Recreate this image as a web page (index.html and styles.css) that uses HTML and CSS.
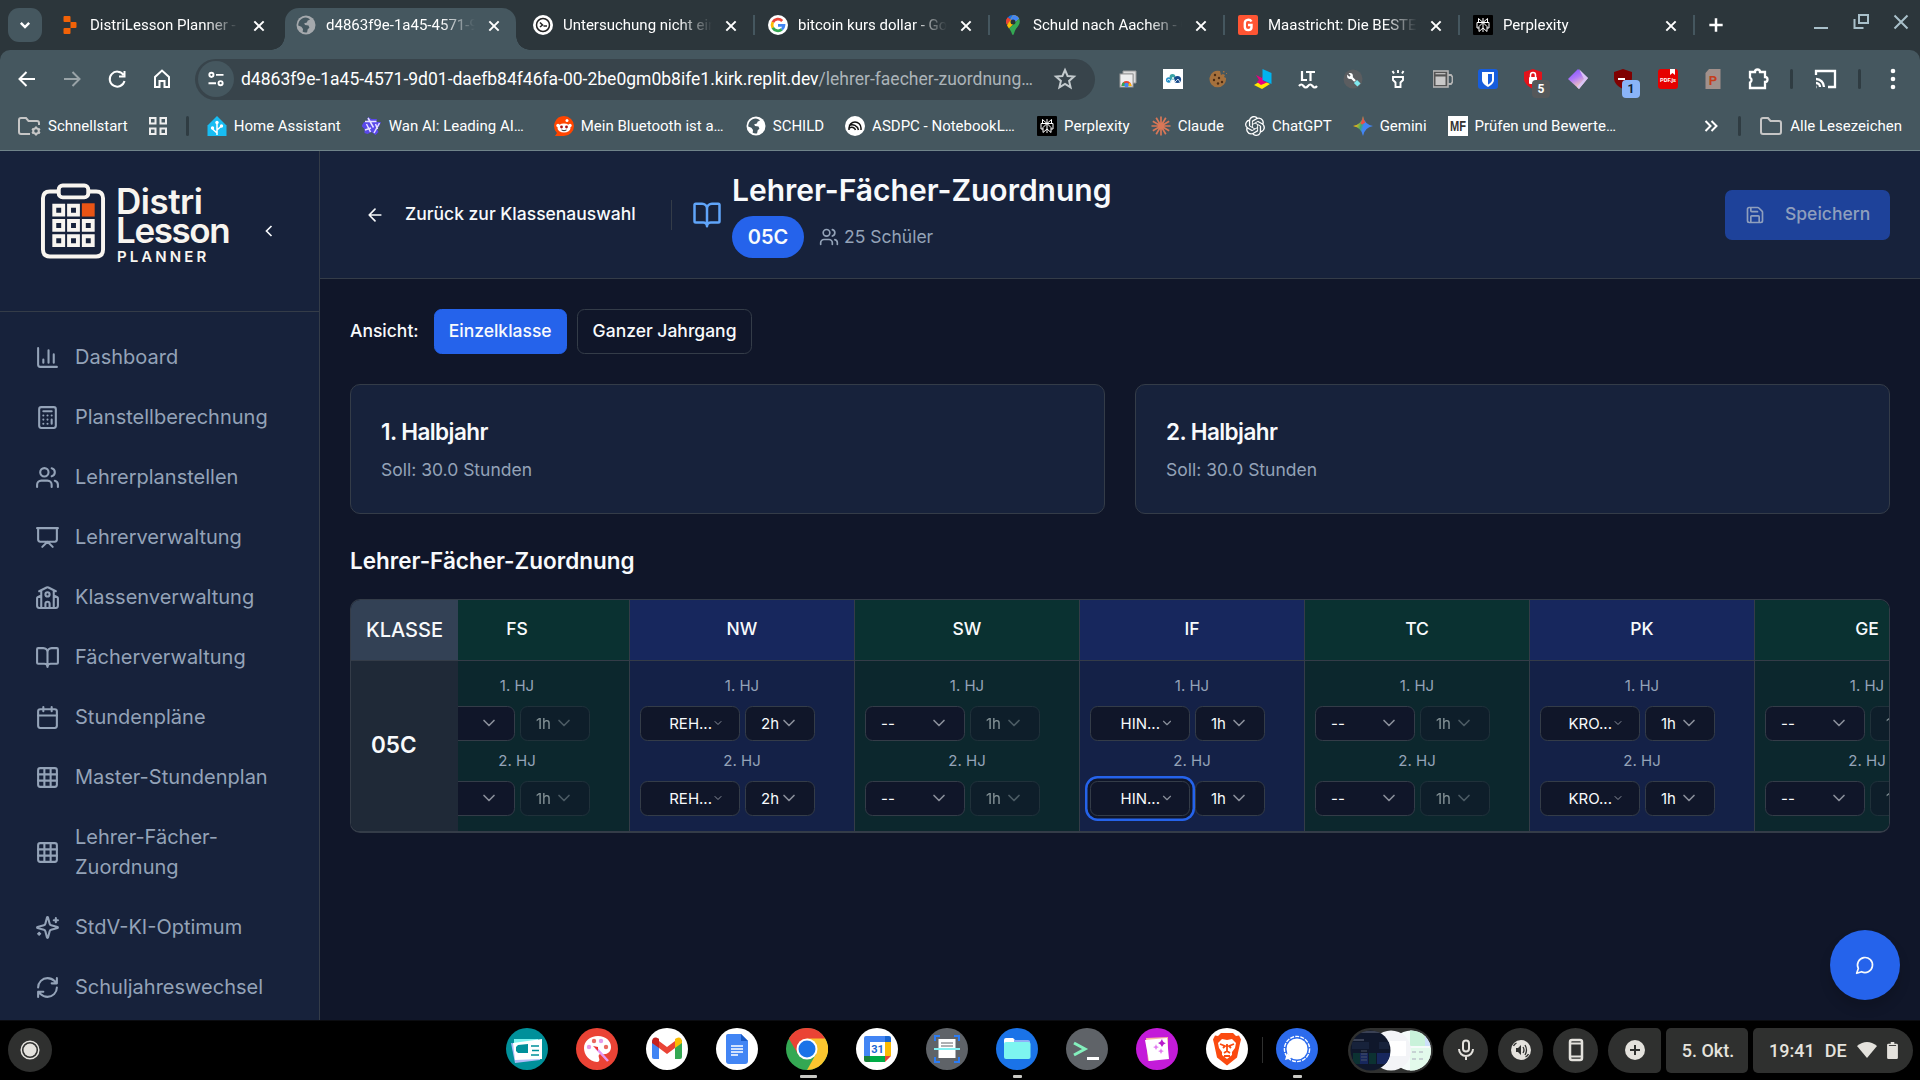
FILE: index.html
```html
<!DOCTYPE html>
<html lang="de">
<head>
<meta charset="utf-8">
<title>DistriLesson Planner</title>
<link rel="stylesheet" href="styles.css">
</head>
<body>
<svg class="sprite" aria-hidden="true">
  <symbol id="close" viewBox="0 0 24 24"><path d="M5 5l14 14M19 5L5 19"/></symbol>
  <symbol id="chart" viewBox="0 0 24 24"><path d="M3 3v16a2 2 0 0 0 2 2h16M18 17V9M13 17V5M8 17v-3"/></symbol>
  <symbol id="calc" viewBox="0 0 24 24"><rect x="4" y="2" width="16" height="20" rx="2"/><path d="M8 6h8M16 14v4M16 10h.01M12 10h.01M8 10h.01M12 14h.01M8 14h.01M12 18h.01M8 18h.01"/></symbol>
  <symbol id="users" viewBox="0 0 24 24"><path d="M16 21v-2a4 4 0 0 0-4-4H6a4 4 0 0 0-4 4v2M22 21v-2a4 4 0 0 0-3-3.87M16 3.13a4 4 0 0 1 0 7.75"/><circle cx="9" cy="7" r="4"/></symbol>
  <symbol id="present" viewBox="0 0 24 24"><path d="M2 3h20M21 3v11a2 2 0 0 1-2 2H5a2 2 0 0 1-2-2V3M7 21l5-5 5 5"/></symbol>
  <symbol id="school" viewBox="0 0 24 24"><path d="M14 22v-4a2 2 0 1 0-4 0v4M18 10l3.447 1.724a1 1 0 0 1 .553.894V20a2 2 0 0 1-2 2H4a2 2 0 0 1-2-2v-7.382a1 1 0 0 1 .553-.894L6 10M18 5v17M4 6l7.106-3.553a2 2 0 0 1 1.788 0L20 6M6 5v17"/><circle cx="12" cy="9" r="2"/></symbol>
  <symbol id="book" viewBox="0 0 24 24"><path d="M12 7v14M3 18a1 1 0 0 1-1-1V4a1 1 0 0 1 1-1h5a4 4 0 0 1 4 4 4 4 0 0 1 4-4h5a1 1 0 0 1 1 1v13a1 1 0 0 1-1 1h-6a3 3 0 0 0-3 3 3 3 0 0 0-3-3z"/></symbol>
  <symbol id="calendar" viewBox="0 0 24 24"><path d="M8 2v4M16 2v4M3 10h18"/><rect x="3" y="4" width="18" height="18" rx="2"/></symbol>
  <symbol id="grid" viewBox="0 0 24 24"><rect x="3" y="3" width="18" height="18" rx="2"/><path d="M3 9h18M3 15h18M9 3v18M15 3v18"/></symbol>
  <symbol id="sparkles" viewBox="0 0 24 24"><path d="M9.937 15.5A2 2 0 0 0 8.5 14.063l-6.135-1.582a.5.5 0 0 1 0-.962L8.5 9.936A2 2 0 0 0 9.937 8.5l1.582-6.135a.5.5 0 0 1 .963 0L14.063 8.5A2 2 0 0 0 15.5 9.937l6.135 1.581a.5.5 0 0 1 0 .964L15.5 14.063a2 2 0 0 0-1.437 1.437l-1.582 6.135a.5.5 0 0 1-.963 0zM20 3v4M22 5h-4M4 17v2M5 18H3"/></symbol>
  <symbol id="refresh" viewBox="0 0 24 24"><path d="M3 12a9 9 0 0 1 9-9 9.75 9.75 0 0 1 6.74 2.74L21 8M21 3v5h-5M21 12a9 9 0 0 1-9 9 9.75 9.75 0 0 1-6.74-2.74L3 16M8 16H3v5"/></symbol>
  <symbol id="chat" viewBox="0 0 24 24"><path d="M7.9 20A9 9 0 1 0 4 16.1L2 22Z"/></symbol>
  <symbol id="save" viewBox="0 0 24 24"><path d="M15.2 3a2 2 0 0 1 1.4.6l3.8 3.8a2 2 0 0 1 .6 1.4V19a2 2 0 0 1-2 2H5a2 2 0 0 1-2-2V5a2 2 0 0 1 2-2zM17 21v-7a1 1 0 0 0-1-1H8a1 1 0 0 0-1 1v7M7 3v4a1 1 0 0 0 1 1h7"/></symbol>
  <symbol id="left" viewBox="0 0 24 24"><path d="M12 19l-7-7 7-7M19 12H5"/></symbol>
  <symbol id="chev" viewBox="0 0 24 24"><path d="M6 9l6 6 6-6"/></symbol>
  <symbol id="chevleft" viewBox="0 0 24 24"><path d="M15 18l-6-6 6-6"/></symbol>
  <symbol id="globe" viewBox="0 0 20 20"><circle cx="10" cy="10" r="9.5" fill="currentColor" stroke="none"/><path d="M9.5 2.6c2.2 0 3.6 1 4.4 2.2l-2.2.6-.8 2-2.7.8.8 1.9 3.5.3.9 2.3-1.7 1.6-.6 2.9c-1.5.5-3.3.1-4.4-.5l.3-2.8-1.6-2.2-3.2-1.1C2.3 6.200 5.400 2.700 9.500 2.600z" class="globe-land" stroke="none"/></symbol>
  <symbol id="perplexity" viewBox="0 0 20 20"><rect width="20" height="20" rx="1" fill="#000" stroke="none"/><path d="M10 3v14M5.500 3.500v4l4.500 0 4.500 0v-4L10 7.500zM10 7.500H4v5.500h2M10 7.500h6V13h-2M10 7.500L6 11.500v5L10 13M10 7.500l4 4v5L10 13" fill="none" stroke="#fff" stroke-width="1"/></symbol>
  <symbol id="folder" viewBox="0 0 24 20"><path d="M2 4q0-2 2-2h5l2.500 3H20q2 0 2 2v9q0 2-2 2H4q-2 0-2-2z"/></symbol>
</svg>

<header class="browser">
  <div class="tabstrip">
    <div class="tabmenu"><svg viewBox="0 0 24 24" class="ln i20 w3"><path d="M7 9.500l5 5 5-5"/></svg></div>
    <div class="tab first"><svg class="fav" viewBox="0 0 20 20"><path d="M4.500 1h5q1 0 1 1v5h-6q-1 0-1-1V2q0-1 1-1zM10.500 7h5q1 0 1 1v4q0 1-1 1h-5zM4.500 13h6v5q0 1-1 1h-5q-1 0-1-1v-4q0-1 1-1z" fill="#f26207"/></svg><span class="title">DistriLesson Planner - Replit</span><svg class="x"><use href="#close"/></svg></div>
    <div class="tab active"><svg class="fav grey"><use href="#globe"/></svg><span class="title">d4863f9e-1a45-4571-9d01</span><svg class="x"><use href="#close"/></svg></div>
    <div class="tab"><svg class="fav" viewBox="0 0 20 20"><circle cx="10" cy="10" r="10" fill="#fff"/><circle cx="10" cy="10" r="6.500" fill="none" stroke="#222" stroke-width="1.500"/><path d="M7 7.500l2.500 2.500L7 12M10.500 11h3.500" stroke="#222" stroke-width="1.500" fill="none"/></svg><span class="title">Untersuchung nicht eindeutig</span><svg class="x"><use href="#close"/></svg></div>
    <div class="tab"><svg class="fav" viewBox="0 0 20 20"><circle cx="10" cy="10" r="10" fill="#fff"/><g fill="none" stroke-width="2.800"><path d="M14.200 6A5.900 5.900 0 0 0 4.800 7.200" stroke="#ea4335"/><path d="M4.800 7.200a5.900 5.900 0 0 0 0 5.600" stroke="#fbbc04"/><path d="M4.800 12.800a5.900 5.900 0 0 0 9 1.600" stroke="#34a853"/><path d="M13.800 14.400c1.300-1 2-2.500 2.100-4.100H10" stroke="#4285f4"/></g></svg><span class="title">bitcoin kurs dollar - Google Suche</span><svg class="x"><use href="#close"/></svg></div>
    <div class="tab"><svg class="fav" viewBox="0 0 20 20"><path d="M10 0a7 7 0 0 0-5.300 2.400L8 5z" fill="#1a73e8"/><path d="M4.700 2.400A7 7 0 0 0 4 10l4-5z" fill="#ea4335"/><path d="M10 0a7 7 0 0 1 6.200 3.700L6 13.500A30 30 0 0 1 4 10.200z" fill="#fbbc04"/><path d="M10 0a7 7 0 0 1 6.200 3.700L12 7 7.500 5z" fill="#4285f4"/><path d="M16.200 3.700c1.800 4.200-.8 7-3 9.800-1.700 2.200-2 6.500-3.200 6.500s-1.300-3.700-4-6.500z" fill="#34a853"/><path d="M4.700 2.400A7 7 0 0 0 3.400 9L8 5z" fill="#ea4335"/><circle cx="10" cy="7" r="2.500" fill="#273238"/></svg><span class="title">Schuld nach Aachen - Google</span><svg class="x"><use href="#close"/></svg></div>
    <div class="tab"><svg class="fav" viewBox="0 0 20 20"><rect width="20" height="20" rx="2" fill="#ff5533"/><path d="M13.500 6.500C12 4 7 4.200 6.800 8v4c.2 4.200 6.700 4 6.700.2V10H10" fill="none" stroke="#fff" stroke-width="2.400"/></svg><span class="title">Maastricht: Die BESTEN Tipps</span><svg class="x"><use href="#close"/></svg></div>
    <div class="tab"><svg class="fav"><use href="#perplexity"/></svg><span class="title">Perplexity</span><svg class="x"><use href="#close"/></svg></div>
    <div class="newtab"><svg viewBox="0 0 24 24" class="ln i20 w3"><path d="M12 4v16M4 12h16"/></svg></div>
    <div class="winctl">
      <svg viewBox="0 0 20 20" class="ln i20"><path d="M3 16h14"/></svg>
      <svg viewBox="0 0 20 20" class="ln i20"><path d="M8 3h9v8H8zM3.500 7v9h9" /></svg>
      <svg viewBox="0 0 20 20" class="ln i20"><path d="M3.500 3.500l13 13M16.500 3.500l-13 13"/></svg>
    </div>
  </div>

  <div class="toolbar">
    <div class="navbtns">
      <svg viewBox="0 0 24 24" class="ln i24"><path d="M20 12H5M11.500 5L4.500 12l7 7"/></svg>
      <svg viewBox="0 0 24 24" class="ln i24 faded"><path d="M4 12h15M12.500 5l7 7-7 7"/></svg>
      <svg viewBox="0 0 24 24" class="ln i24"><path d="M18.500 8A7.500 7.500 0 1 0 19.500 14M19.500 4v5.500H14"/></svg>
      <svg viewBox="0 0 24 24" class="ln i24"><path d="M5 20V10l7-6.500L19 10v10h-4.500v-6h-5v6z"/></svg>
    </div>
    <div class="urlbar">
      <span class="tune"><svg viewBox="0 0 24 24" class="ln i20 w2b"><circle cx="6.500" cy="7" r="2.500"/><path d="M12 7h9M3 17h9"/><circle cx="17.500" cy="17" r="2.500"/></svg></span>
      <span class="url">d4863f9e-1a45-4571-9d01-daefb84f46fa-00-2be0gm0b8ife1.kirk.replit.dev<i>/lehrer-faecher-zuordnung…</i></span>
      <svg viewBox="0 0 24 24" class="ln star"><path d="M12 3l2.600 6 6.400.6-4.900 4.300 1.500 6.400L12 16.900l-5.600 3.400 1.500-6.400L3 9.600 9.400 9z"/></svg>
    </div>
    <div class="exts">
      <span><svg viewBox="0 0 20 20"><path d="M5 2h13v12h-3V5H5z" fill="#ddd" stroke="#999"/><rect x="2" y="5" width="13" height="13" fill="#eee" stroke="#999"/><path d="M3.500 17a5 5 0 0 1 10 0z" fill="#ea4335"/><path d="M3.500 17a5 5 0 0 1 2-4l3 4z" fill="#34a853"/><path d="M13.500 17a5 5 0 0 0-2-3.600L9 17z" fill="#fbbc04"/><circle cx="8.500" cy="16" r="2.200" fill="#4285f4"/></svg></span>
      <span><svg viewBox="0 0 20 20"><rect width="20" height="20" fill="#fff"/><circle cx="5.800" cy="11" r="2.800" fill="#238fc8"/><circle cx="9.500" cy="8" r="2.900" fill="#39a3a5"/><circle cx="14.500" cy="10.500" r="3.600" fill="#174a8b"/><path d="M4 11.500l2-1.500 2 3 2-5 2 5 3-3 2 3" stroke="#fff" stroke-width=".8" fill="none"/></svg></span>
      <span><svg viewBox="0 0 20 20"><path d="M12 2A8.300 8.300 0 1 0 18 9l-2-1 1-2-2-1-2 1z" fill="#a5713d"/><path d="M15 2h1.500v1.500H15zM18 4h1v1h-1z" fill="#a5713d"/><g fill="#4a2c14"><circle cx="7" cy="6" r="1.200"/><circle cx="11" cy="9" r="1.200"/><circle cx="6" cy="11" r="1.200"/><circle cx="10" cy="14.500" r="1.200"/><circle cx="14" cy="13" r="1.200"/></g></svg></span>
      <span><svg viewBox="0 0 20 20"><path d="M1 16l5-3 4 2 3-2 4 2-8 5z" fill="#ffe600"/><path d="M3 6l6 3 1-2v5l5 1-7 3-4-3 2-2z" fill="#e6007e"/><path d="M9.500 0l9 4v11l-9-4z" fill="#00b4f0"/></svg></span>
      <span><svg viewBox="0 0 20 20" fill="none" stroke="#fff" stroke-width="2.200"><path d="M4 2v9h5M8 3h9M12.500 3v9M1 17q2.300-3 4.500 0t4.500 0 4.500 0 4.500 0"/></svg></span>
      <span><svg viewBox="0 0 20 20"><circle cx="10" cy="10" r="9.500" fill="#5b5d60"/><path d="M7 7l5 5" stroke="#fff" stroke-width="2.400"/><circle cx="7" cy="7" r="2.900" fill="#fff"/><path d="M4 4l3 3" stroke="#5b5d60" stroke-width="1.800"/><path d="M12.500 12.500l3.500 3.500" stroke="#7fe8ee" stroke-width="4.500"/></svg></span>
      <span><svg viewBox="0 0 20 20" fill="none" stroke="#fff" stroke-width="1.900"><path d="M5 8h10v3l-2.500 2.500V18h-5v-4.500L5 11zM10 1v3M4.500 2l1.500 2.500M15.500 2L14 4.500"/></svg></span>
      <span><svg viewBox="0 0 20 20"><path d="M15 6h3l1.500 2v5L18 15h-3" fill="none" stroke="#b5b5b5" stroke-width="1.800"/><rect x="0" y="2" width="15" height="16" fill="#555" stroke="#b5b5b5" stroke-width="1.600"/><rect x="2.500" y="7.500" width="10" height="8.500" fill="#c8c8c8"/><path d="M2.500 4.700h10" stroke="#c8c8c8" stroke-width="1.200"/></svg></span>
      <span><svg viewBox="0 0 20 20"><rect width="20" height="20" rx="3" fill="#175ddc"/><path d="M4 3h12v8c0 4-6 7-6 7s-6-3-6-7z" fill="#fff"/><path d="M10 5h4v6c0 2.500-4 4.500-4 4.500z" fill="#175ddc"/></svg></span>
      <span><svg viewBox="0 0 20 20"><path d="M10 0l9 3v6c0 6-5 9-9 11-4-2-9-5-9-11V3z" fill="#e3131b"/><rect x="6" y="8" width="8" height="7" rx="1" fill="#fff"/><path d="M7.500 9V6a2.500 2.500 0 0 1 5 0v3" fill="none" stroke="#fff" stroke-width="1.500"/></svg><b class="badge">5</b></span>
      <span><svg viewBox="0 0 20 20"><defs><linearGradient id="dg" x1="0" y1="0" x2=".5" y2="1"><stop stop-color="#7a4cff"/><stop offset=".5" stop-color="#b07af8"/><stop offset="1" stop-color="#ffd5b0"/></linearGradient></defs><path d="M10 0l10 9-9 11L0 10z" fill="url(#dg)"/><path d="M11 0l9 9-9 11-2-2 7-8z" fill="#d9c3f5"/></svg></span>
      <span><svg viewBox="0 0 20 20"><path d="M10 0l9 3v6c0 6-5 9-9 11-4-2-9-5-9-11V3z" fill="#800000"/><path d="M5 10h7" stroke="#fff" stroke-width="2"/></svg><b class="badge blue">1</b></span>
      <span><svg viewBox="0 0 20 20"><rect width="20" height="20" rx="3" fill="#e60000"/><path d="M12 0h5v6l-2.500-2L12 6z" fill="#fff"/><text x="10" y="13" class="tiny" text-anchor="middle">PDF.js</text></svg></span>
      <span><svg viewBox="0 0 20 20"><path d="M2.500 4L6 0h11.500v20h-15z" fill="#a1908b"/><text x="10" y="16" class="pt" text-anchor="middle">P</text></svg></span>
      <span><svg viewBox="0 0 24 24" class="ln i24 w2b"><path d="M4 5h5a2.500 2.500 0 0 1 5 0h5v5a2.500 2.500 0 0 1 0 5v6H4v-5.500a2.800 2.800 0 0 0 0-5z"/></svg></span>
    </div>
    <i class="vsep"></i>
    <svg viewBox="0 0 24 24" class="ln i24 cast w2b"><path d="M3 8V4h19v16h-7M3 20h.5M3 16a4 4 0 0 1 4 4M3 12a8 8 0 0 1 8 8"/></svg>
    <i class="vsep"></i>
    <svg viewBox="0 0 24 24" class="i24 dots"><g fill="#fff"><circle cx="12" cy="4" r="2.300"/><circle cx="12" cy="12" r="2.300"/><circle cx="12" cy="20" r="2.300"/></g></svg>
  </div>

  <div class="bookmarks">
    <a class="bm"><svg viewBox="0 0 24 20" class="ln fold"><path d="M13 18H4q-2 0-2-2V4q0-2 2-2h5l2.500 3H20q2 0 2 2v2"/><circle cx="19" cy="15" r="2.800"/><path d="M19 10.500v2M19 17.500v2M15 12.800l1.700 1M21.300 16.200l1.700 1M15 17.200l1.700-1M21.300 13.800l1.700-1" /></svg><span>Schnellstart</span></a>
    <svg class="apps ln" viewBox="0 0 20 20"><path d="M2 2h5.500v5.500H2zM12.500 2H18v5.500h-5.500zM2 12.500h5.500V18H2zM12.500 12.500H18V18h-5.500z"/></svg>
    <i class="vsep bmsep"></i>
    <a class="bm"><svg class="fav" viewBox="0 0 20 20"><path d="M10 0l9.500 9.500V20H.5V9.500z" fill="#18bcf2"/><path d="M10 19V7M10 17l-4.500-4M10 14l4.500-4" stroke="#fff" stroke-width="1.500"/><circle cx="10" cy="6.500" r="1.700" fill="#fff"/><circle cx="5.500" cy="12" r="1.700" fill="#fff"/><circle cx="14.500" cy="10" r="1.700" fill="#fff"/></svg><span>Home Assistant</span></a>
    <a class="bm"><svg class="fav" viewBox="0 0 20 20"><path d="M6 1l3.500 2H15l-1 3 5 0-2 5-2.500 1 2 4-3 3-4-3-4 2-3-1 0-4-3-3 2.500-4L5 6z" fill="#5a48ea"/><path d="M3 5.500h11.500M6 2l5.500 9.500M17.500 7L12 17M4.500 8l4 8M3 14l6-2M13.500 8l2 5" stroke="#e6e0ff" stroke-width="1.500" fill="none"/></svg><span class="cut">Wan AI: Leading AI…</span></a>
    <a class="bm"><svg class="fav" viewBox="0 0 20 20"><path d="M10 0a10 10 0 1 1 0 20H1l2-3A10 10 0 0 1 10 0z" fill="#ff4500"/><ellipse cx="10" cy="12" rx="6.500" ry="4.500" fill="#fff"/><circle cx="4" cy="9.500" r="1.700" fill="#fff"/><circle cx="16" cy="9.500" r="1.700" fill="#fff"/><circle cx="13" cy="4.500" r="1.500" fill="#fff"/><circle cx="7.500" cy="11" r="1.400" fill="#a11"/><circle cx="12.500" cy="11" r="1.400" fill="#a11"/><path d="M7.500 14q2.500 1.500 5 0" stroke="#333" fill="none"/></svg><span class="cut">Mein Bluetooth ist a…</span></a>
    <a class="bm"><svg class="fav white"><use href="#globe"/></svg><span>SCHILD</span></a>
    <a class="bm"><svg class="fav" viewBox="0 0 20 20"><circle cx="10" cy="10" r="10" fill="#fff"/><g fill="none" stroke="#111" stroke-width="1.500"><path d="M4 14v-2a6 6 0 0 1 12 0v2M4 9.500a6.500 6.500 0 0 1 9.500 4.500M4.500 12a4 4 0 0 1 6 2"/></g></svg><span class="cut">ASDPC - NotebookL…</span></a>
    <a class="bm"><svg class="fav"><use href="#perplexity"/></svg><span>Perplexity</span></a>
    <a class="bm"><svg class="fav" viewBox="0 0 20 20" stroke="#d97757" stroke-width="1.700"><path d="M10 .5v19M.5 10h19M5.200 1.800l9.600 16.400M14.800 1.800L5.200 18.200M1.800 5.200l16.400 9.600M1.800 14.800l16.400-9.600"/></svg><span>Claude</span></a>
    <a class="bm"><svg class="fav" viewBox="0 0 24 24" fill="#fff"><path d="M22.282 9.821a5.985 5.985 0 0 0-.516-4.910 6.046 6.046 0 0 0-6.510-2.900A6.065 6.065 0 0 0 4.981 4.182a5.985 5.985 0 0 0-3.998 2.900 6.046 6.046 0 0 0 .743 7.097 5.980 5.980 0 0 0 .511 4.911 6.051 6.051 0 0 0 6.515 2.900A5.985 5.985 0 0 0 13.260 24a6.056 6.056 0 0 0 5.772-4.206 5.990 5.990 0 0 0 3.998-2.900 6.056 6.056 0 0 0-.748-7.073zM13.260 22.430a4.476 4.476 0 0 1-2.876-1.040l.141-.081 4.779-2.758a.795.795 0 0 0 .393-.681v-6.737l2.020 1.169a.071.071 0 0 1 .038.052v5.583a4.504 4.504 0 0 1-4.495 4.493zM3.600 18.304a4.471 4.471 0 0 1-.535-3.014l.142.085 4.783 2.758a.771.771 0 0 0 .781 0l5.843-3.368v2.332a.080.080 0 0 1-.033.062L9.740 19.950a4.499 4.499 0 0 1-6.140-1.646zM2.341 7.896a4.485 4.485 0 0 1 2.366-1.973V11.600a.766.766 0 0 0 .388.677l5.815 3.354-2.020 1.169a.076.076 0 0 1-.071 0l-4.830-2.787A4.504 4.504 0 0 1 2.341 7.872zM18.938 11.752L13.104 8.364 15.119 7.200a.076.076 0 0 1 .071 0l4.830 2.791a4.494 4.494 0 0 1-.676 8.105v-5.678a.790.790 0 0 0-.406-.666zM20.948 8.729l-.142-.085-4.774-2.782a.776.776 0 0 0-.785 0L9.409 9.230V6.897a.066.066 0 0 1 .028-.061l4.830-2.787a4.499 4.499 0 0 1 6.681 4.660zM8.306 12.863l-2.020-1.164a.080.080 0 0 1-.038-.057V6.075a4.499 4.499 0 0 1 7.376-3.453l-.142.080L8.704 5.460a.795.795 0 0 0-.393.681zM9.404 10.498l2.602-1.500 2.607 1.500v2.999l-2.597 1.500-2.607-1.500z" fill-rule="evenodd"/></svg><span>ChatGPT</span></a>
    <a class="bm"><svg class="fav" viewBox="0 0 20 20"><defs><linearGradient id="gem" x1="0" y1=".3" x2="1" y2=".6"><stop offset=".15" stop-color="#f8b90a"/><stop offset=".42" stop-color="#3fa96a"/><stop offset=".55" stop-color="#4285f4"/></linearGradient></defs><path d="M10 0q1.500 8.500 10 10-8.500 1.500-10 10Q8.500 11.500 0 10 8.500 8.500 10 0z" fill="url(#gem)"/><path d="M10 0q.6 4 2.400 6.500L9 8.500 7.500 7.500Q9.400 5 10 0z" fill="#ea4f45"/></svg><span>Gemini</span></a>
    <a class="bm"><svg class="fav" viewBox="0 0 20 20"><rect width="20" height="20" fill="#fff"/><text x="10" y="15" class="mf" text-anchor="middle" textLength="16" lengthAdjust="spacingAndGlyphs">MF</text></svg><span class="cut">Prüfen und Bewerte…</span></a>
    <svg viewBox="0 0 20 20" class="ln i20 more"><path d="M4.500 5l5 5-5 5M10.500 5l5 5-5 5"/></svg>
    <i class="vsep"></i>
    <a class="bm all"><svg class="ln fold"><use href="#folder"/></svg><span>Alle Lesezeichen</span></a>
  </div>
</header>

<div class="app">
  <aside class="sidebar">
    <div class="brand">
      <svg class="clip" viewBox="0 0 66 76"><g fill="none" stroke="#f8f5f0" stroke-width="4"><path d="M17 8H9q-7 0-7 7v52q0 7 7 7h47q7 0 7-7V15q0-7-7-7h-8"/><rect x="18" y="2" width="30" height="12" rx="4"/></g><g fill="none" stroke="#f8f5f0" stroke-width="4"><path d="M13.500 22.500h9v9h-9zM28.500 22.500h9v9h-9zM13.500 38h9v9h-9zM28.500 38h9v9h-9zM43.500 38h9v9h-9zM13.500 53.500h9v9h-9zM28.500 53.500h9v9h-9zM43.500 53.500h9v9h-9z"/></g><rect x="41.500" y="20" width="13" height="13.500" fill="#e95415"/></svg>
      <div class="wordmark"><b>Distri</b><b class="lesson">Lesson</b><small>PLANNER</small></div>
      <svg class="ln i20 collapse"><use href="#chevleft"/></svg>
    </div>
    <nav>
      <a><svg><use href="#chart"/></svg><span>Dashboard</span></a>
      <a><svg><use href="#calc"/></svg><span>Planstellberechnung</span></a>
      <a><svg><use href="#users"/></svg><span>Lehrerplanstellen</span></a>
      <a><svg><use href="#present"/></svg><span>Lehrerverwaltung</span></a>
      <a><svg><use href="#school"/></svg><span>Klassenverwaltung</span></a>
      <a><svg><use href="#book"/></svg><span>Fächerverwaltung</span></a>
      <a><svg><use href="#calendar"/></svg><span>Stundenpläne</span></a>
      <a><svg><use href="#grid"/></svg><span>Master-Stundenplan</span></a>
      <a><svg><use href="#grid"/></svg><span>Lehrer-Fächer-<br>Zuordnung</span></a>
      <a><svg><use href="#sparkles"/></svg><span>StdV-KI-Optimum</span></a>
      <a><svg><use href="#refresh"/></svg><span>Schuljahreswechsel</span></a>
    </nav>
  </aside>
  <main>
    <div class="pagehead">
      <a class="back"><svg class="ln i20"><use href="#left"/></svg><span>Zurück zur Klassenauswahl</span></a>
      <i class="divider"></i>
      <svg class="headbook"><use href="#book"/></svg>
      <div class="headtext">
        <h1>Lehrer-Fächer-Zuordnung</h1>
        <div class="meta"><span class="pill">05C</span><span class="pupils"><svg class="ln i20"><use href="#users"/></svg>25 Schüler</span></div>
      </div>
      <button class="savebtn"><svg class="ln i20"><use href="#save"/></svg><span>Speichern</span></button>
    </div>
    <div class="content">
      <div class="viewrow"><span>Ansicht:</span><button class="btn on">Einzelklasse</button><button class="btn">Ganzer Jahrgang</button></div>
      <div class="cards">
        <section class="card"><h3>1. Halbjahr</h3><p>Soll: 30.0 Stunden</p></section>
        <section class="card"><h3>2. Halbjahr</h3><p>Soll: 30.0 Stunden</p></section>
      </div>
      <h2>Lehrer-Fächer-Zuordnung</h2>
      <div class="table">
        <div class="stickycol"><div class="th">KLASSE</div><div class="td">05C</div></div>
        <div class="scroller">
          <div class="col green"><div class="th">FS</div><div class="td">
            <label>1. HJ</label><div class="pair"><span class="sel"><em>--</em><svg><use href="#chev"/></svg></span><span class="sel hrs off">1h<svg><use href="#chev"/></svg></span></div>
            <label>2. HJ</label><div class="pair"><span class="sel"><em>--</em><svg><use href="#chev"/></svg></span><span class="sel hrs off">1h<svg><use href="#chev"/></svg></span></div></div></div>
          <div class="col blue"><div class="th">NW</div><div class="td">
            <label>1. HJ</label><div class="pair"><span class="sel set"><em>REH...</em><svg><use href="#chev"/></svg></span><span class="sel hrs">2h<svg><use href="#chev"/></svg></span></div>
            <label>2. HJ</label><div class="pair"><span class="sel set"><em>REH...</em><svg><use href="#chev"/></svg></span><span class="sel hrs">2h<svg><use href="#chev"/></svg></span></div></div></div>
          <div class="col green"><div class="th">SW</div><div class="td">
            <label>1. HJ</label><div class="pair"><span class="sel"><em>--</em><svg><use href="#chev"/></svg></span><span class="sel hrs off">1h<svg><use href="#chev"/></svg></span></div>
            <label>2. HJ</label><div class="pair"><span class="sel"><em>--</em><svg><use href="#chev"/></svg></span><span class="sel hrs off">1h<svg><use href="#chev"/></svg></span></div></div></div>
          <div class="col blue"><div class="th">IF</div><div class="td">
            <label>1. HJ</label><div class="pair"><span class="sel set slim"><em>HIN...</em><svg><use href="#chev"/></svg></span><span class="sel hrs">1h<svg><use href="#chev"/></svg></span></div>
            <label>2. HJ</label><div class="pair"><span class="sel set slim focus"><em>HIN...</em><svg><use href="#chev"/></svg></span><span class="sel hrs">1h<svg><use href="#chev"/></svg></span></div></div></div>
          <div class="col green"><div class="th">TC</div><div class="td">
            <label>1. HJ</label><div class="pair"><span class="sel"><em>--</em><svg><use href="#chev"/></svg></span><span class="sel hrs off">1h<svg><use href="#chev"/></svg></span></div>
            <label>2. HJ</label><div class="pair"><span class="sel"><em>--</em><svg><use href="#chev"/></svg></span><span class="sel hrs off">1h<svg><use href="#chev"/></svg></span></div></div></div>
          <div class="col blue"><div class="th">PK</div><div class="td">
            <label>1. HJ</label><div class="pair"><span class="sel set"><em>KRO...</em><svg><use href="#chev"/></svg></span><span class="sel hrs">1h<svg><use href="#chev"/></svg></span></div>
            <label>2. HJ</label><div class="pair"><span class="sel set"><em>KRO...</em><svg><use href="#chev"/></svg></span><span class="sel hrs">1h<svg><use href="#chev"/></svg></span></div></div></div>
          <div class="col green"><div class="th">GE</div><div class="td">
            <label>1. HJ</label><div class="pair"><span class="sel"><em>--</em><svg><use href="#chev"/></svg></span><span class="sel hrs off">1h<svg><use href="#chev"/></svg></span></div>
            <label>2. HJ</label><div class="pair"><span class="sel"><em>--</em><svg><use href="#chev"/></svg></span><span class="sel hrs off">1h<svg><use href="#chev"/></svg></span></div></div></div>
        </div>
      </div>
    </div>
    <button class="chatbtn"><svg class="ln i20"><use href="#chat"/></svg></button>
  </main>
</div>

<footer class="shelf">
  <span class="launcher"><svg viewBox="0 0 20 20"><circle cx="10" cy="10" r="8.800" fill="none" stroke="#e4e2dd" stroke-width="1.500"/><circle cx="10" cy="10" r="6.500" fill="#e4e2dd"/></svg></span>
  <div class="dock">
    <span><svg viewBox="0 0 42 42"><circle cx="21" cy="21" r="21" fill="#00909a"/><path d="M8 11h24v4H8z" fill="#7ff3ef"/><path d="M5 15l4 20 25-3V20z" fill="#aebcf7"/><path d="M7 15l29-4v20l-27 1z" fill="#fff"/><path d="M12 17l10-1v9H12l-2-2v-4z" fill="#00909a"/><path d="M25 18h8M26 22.500h7M25 27h8" stroke="#00909a" stroke-width="1.500"/></svg></span>
    <span><svg viewBox="0 0 42 42"><circle cx="21" cy="21" r="21" fill="#ea4335"/><path d="M22 8c8 0 13 5 13 11 0 5-4 8-9 7-3-.5-4 1-3 4 1 2 0 4-2 4C13 33 8 27 8 20S14 8 22 8z" fill="#fff"/><g fill="#ea6a60"><circle cx="18" cy="13" r="2.200"/><circle cx="30" cy="19" r="2.200"/></g><g fill="#e59ae8"><circle cx="13" cy="19" r="2.200"/><circle cx="25" cy="13" r="2.200"/></g><path d="M20 20l12 13" stroke="#e59af5" stroke-width="2.500"/><path d="M17 18l5 1 0 4z" fill="#e33"/></svg></span>
    <span><svg viewBox="0 0 42 42"><circle cx="21" cy="21" r="21" fill="#fff"/><path d="M6 12v17q0 2 2 2h5V16z" fill="#4285f4"/><path d="M36 12v17q0 2-2 2h-5V16z" fill="#34a853"/><path d="M13 13l8 6 8-6v7l-8 6-8-6z" fill="#ea4335"/><path d="M6 14c0-5 4-5.500 7-3v9l-7-5z" fill="#c5221f"/><path d="M36 14c0-5-4-5.500-7-3v9l7-5z" fill="#fbbc04"/></svg></span>
    <span><svg viewBox="0 0 42 42"><circle cx="21" cy="21" r="21" fill="#fff"/><path d="M12 6h13l7 7v20q0 3-3 3H13q-3 0-3-3V8q0-2 2-2z" fill="#4285f4"/><path d="M25 6l7 7h-7z" fill="#1a5bc7"/><path d="M15 18h12M15 21h12M15 24h12M15 27h7" stroke="#fff" stroke-width="1.500"/></svg></span>
    <span class="run wide"><svg viewBox="0 0 42 42"><circle cx="21" cy="21" r="21" fill="#34a853"/><path d="M21 21L2.800 10.500A21 21 0 0 1 39.200 10.500z" fill="#ea4335"/><path d="M21 10.500h18.200A21 21 0 0 1 21 42l9-16z" fill="#fbc62f"/><path d="M2.800 10.500L12 26l9-15.500z" fill="#ea4335"/><circle cx="21" cy="21" r="10.500" fill="#fff"/><circle cx="21" cy="21" r="8.500" fill="#1a73e8"/></svg></span>
    <span><svg viewBox="0 0 42 42"><circle cx="21" cy="21" r="21" fill="#fff"/><path d="M8 10q0-2 2-2h19v6H14v14H8z" fill="#4285f4"/><path d="M29 8h4q2 0 2 2v4h-6z" fill="#1967d2"/><path d="M29 14h6v14h-6z" fill="#fbbc04"/><path d="M14 28h15v6H14z" fill="#00ac47"/><path d="M8 28h6v6h-4q-2 0-2-2z" fill="#188038"/><path d="M29 28h6l-6 6z" fill="#ea4335"/><text x="21.500" y="25" class="cal" text-anchor="middle">31</text></svg></span>
    <span><svg viewBox="0 0 42 42"><circle cx="21" cy="21" r="21" fill="#5f6368"/><path d="M14 8H9v5M28 8h5v5M14 34H9v-5M28 34h5v-5" fill="none" stroke="#2b7cf5" stroke-width="2"/><rect x="12.500" y="11" width="17" height="19" fill="#fff"/><path d="M15 15h12M15 18h12" stroke="#5f6368"/><path d="M8 21h26" stroke="#84f0f2" stroke-width="2"/></svg></span>
    <span class="run"><svg viewBox="0 0 42 42"><circle cx="21" cy="21" r="21" fill="#1a73e8"/><path d="M8 12q0-2 2-2h7l3 3h12q2 0 2 2v5H8z" fill="#fff"/><path d="M18 12h14q2 0 2 2v3H18z" fill="#8fb0f8"/><rect x="8" y="14" width="26.500" height="17" rx="2" fill="#7df5f0"/></svg></span>
    <span><svg viewBox="0 0 42 42"><circle cx="21" cy="21" r="21" fill="#5f6368"/><path d="M8 15l11 6-11 6" fill="none" stroke="#84f0bd" stroke-width="3"/><path d="M21 30.500h12" stroke="#fff" stroke-width="3"/></svg></span>
    <span><svg viewBox="0 0 42 42"><circle cx="21" cy="21" r="21" fill="#c31bd9"/><path d="M10 10l22-1v21l-20 3z" fill="#f7b8a0"/><path d="M9 12l22-2 2 21-20 2z" fill="#fff"/><path d="M26 11q1 4 4 4-3 1-4 4-1-3-4-4 3-1 4-4z" fill="#b81dcc"/><path d="M20 16q.5 3 3 3-2.500.5-3 3-.5-2.500-3-3 2.500 0 3-3zM25 20q.5 3 3 3-2.500.5-3 3-.5-2.500-3-3 2.500 0 3-3z" fill="#e27bf0"/></svg></span>
    <span><svg viewBox="0 0 42 42"><circle cx="21" cy="21" r="21" fill="#fff"/><path d="M15 5h12l3 3 3-.5 2 4-1 4-3 14-10 8-10-8-3-14-1-4 2-4 3 .5z" fill="#fb4a10"/><path d="M21 12l5-1 4 4-1 5-3 4 0 3-5 4-5-4 0-3-3-4-1-5 4-4z" fill="#fff"/><path d="M14 16l5 2-2 2M28 16l-5 2 2 2M21 16v7l-3 2M21 23l3 2M18 28h6" fill="none" stroke="#fb4a10" stroke-width="1.800"/></svg></span>
    <i class="docksep"></i>
    <span class="run"><svg viewBox="0 0 42 42"><circle cx="21" cy="21" r="21" fill="#2c6bed"/><circle cx="21" cy="21" r="10.500" fill="#fff"/><path d="M11 25l-2 7 7-2z" fill="#fff"/><circle cx="21" cy="21" r="12.600" fill="none" stroke="#fff" stroke-width="1.400" stroke-dasharray="4 1.200"/></svg></span>
  </div>
  <svg class="tote" viewBox="0 0 85 45"><defs><clipPath id="c1"><circle cx="22.500" cy="22.500" r="20"/></clipPath><clipPath id="c3"><circle cx="63" cy="22.500" r="20"/></clipPath></defs><rect width="85" height="45" rx="22.500" fill="#2f302f"/><g clip-path="url(#c3)"><path d="M43 0h42v45H43z" fill="#f5fbfa"/><path d="M62 2h15v16H62z" fill="#c9f2da"/><path d="M77 2h8v16h-8z" fill="#cde0fa"/><path d="M62 20h23v25H62z" fill="#e2faeb"/><path d="M64 24h4M71 24h4M64 31h4M71 31h4" stroke="#aab"/></g><circle cx="43" cy="22.500" r="20" fill="#f3f4f7"/><path d="M42 13h16v15H42z" fill="#fff"/><g clip-path="url(#c1)"><path d="M0 0h45v45H0z" fill="#0f172b"/><path d="M11 4h22M4 12h12" stroke="#7c8496" stroke-width=".8"/><path d="M4 14h17v7H4zM31 14h10v7H31z" fill="#17223b"/><path d="M5 25h7v11H5zM21 25h7v11h-7z" fill="#0c3232"/><path d="M12 25h8v11h-8zM29 25h13v11H29z" fill="#17275d"/><path d="M13 23h6M13 26h6M13 29h6M13 32h6" stroke="#586070" stroke-width=".8"/></g></svg>
  <span class="round"><svg viewBox="0 0 24 24" class="ln i24"><rect x="9" y="2.500" width="6" height="11" rx="3"/><path d="M5 11a7 7 0 0 0 14 0M12 18v4"/></svg></span>
  <span class="round"><svg viewBox="0 0 24 24" class="i24"><circle cx="12" cy="12" r="10" fill="#e4e2dd"/><path d="M7 10v4h2l3 3V7L9 10z" fill="#2f302f"/><path d="M14 9q2 3 0 6M16 7q3 5 0 10M4.500 8q1-2 3-3M19.500 16q-1 2-3 3" stroke="#2f302f" stroke-width="1.300" fill="none"/></svg></span>
  <span class="round"><svg viewBox="0 0 24 24" class="i24"><rect x="6" y="2" width="12" height="20" rx="2" fill="none" stroke="#e4e2dd" stroke-width="2.500"/><path d="M6 5.500h12M6 18.500h12" stroke="#e4e2dd" stroke-width="2"/></svg></span>
  <span class="plus"><svg viewBox="0 0 24 24" class="i24"><circle cx="12" cy="12" r="10" fill="#e4e2dd"/><path d="M12 7v10M7 12h10" stroke="#2f302f" stroke-width="2"/></svg></span>
  <span class="date">5. Okt.</span>
  <span class="status"><span>19:41</span><span>DE</span><svg class="wifi" viewBox="0 0 20 16"><path d="M10 16L0 4q10-8 20 0z" fill="#e4e2dd"/></svg><svg class="bat" viewBox="0 0 12 20"><path d="M4 1h4v2h2.500q1.500 0 1.500 1.500v14q0 1.500-1.500 1.500h-9Q0 20 0 18.500v-14Q0 3 1.500 3H4z" fill="#e4e2dd"/><path d="M2 5h8" stroke="#2f302f"/></svg></span>
</footer>
</body>
</html>
```
FILE: styles.css
```css
* { box-sizing: border-box; }
body { margin: 0; width: 1920px; height: 1080px; overflow: hidden; display: flex; flex-direction: column; background: #101629; color: #f8fafc; font-family: Inter, sans-serif; }
svg { display: block; flex: none; }
.sprite { position: absolute; width: 0; height: 0; }
.ln { fill: none; stroke: currentColor; stroke-width: 2; }
.i20 { width: 20px; height: 20px; }
.i24 { width: 24px; height: 24px; }
.w3 { stroke-width: 3; }
.w2b { stroke-width: 2.3; }
i, em { font-style: normal; }
button { font: inherit; color: inherit; border: 0; padding: 0; background: none; }

/* browser frame */
.browser { height: 151px; flex: none; background: #2c363b; border-bottom: 1px solid #70848a; color: #fff; font: 15px Roboto, sans-serif; }
.tabstrip { height: 50px; display: flex; align-items: center; }
.tabmenu { width: 34px; height: 34px; margin: 0 7px 0 8px; border-radius: 11px; background: #45575f; display: flex; align-items: center; justify-content: center; }
.tab { width: 235px; height: 50px; flex: none; position: relative; display: flex; align-items: center; padding-left: 14px; }
.tab::after { content: ""; position: absolute; right: -1px; top: 15px; width: 2px; height: 20px; background: #45575f; }
.tab.first::after { display: none; }
.tab .title { width: 150px; margin-left: 10px; overflow: hidden; white-space: nowrap; -webkit-mask-image: linear-gradient(90deg, #000 115px, transparent 149px); mask-image: linear-gradient(90deg, #000 115px, transparent 149px); }
.tab .x { width: 16px; height: 16px; margin-left: 10px; margin-top: 2px; fill: none; stroke: #fff; stroke-width: 3; }
.tab.first { padding-left: 11px; }
.tab.first .title { width: 151px; }
.tab.active { padding-left: 12px; }
.tab.active::before { content: ""; position: absolute; left: 1px; width: 231px; top: 8px; bottom: 0; background: #45575f; border-radius: 14px 14px 0 0; }
.tab.active::after { left: -13px; right: auto; top: 36px; width: 259px; height: 14px; background: radial-gradient(circle at 0 0, transparent 13.500px, #45575f 14px) 0 0 / 14px 14px no-repeat, radial-gradient(circle at 100% 0, transparent 13.500px, #45575f 14px) 100% 0 / 14px 14px no-repeat; }
.tab.active > * { position: relative; z-index: 1; }
.fav { width: 20px; height: 20px; }
.grey { color: #a5a9ad; }
.white { color: #fff; }
.globe-land { fill: #45575f; }
.newtab { margin-left: 12px; }
.winctl { display: flex; gap: 20px; margin: -7px 9px 0 auto; color: #a9c0ca; }

.toolbar { height: 58px; display: flex; align-items: center; background: #45575f; border-radius: 10px 10px 0 0; }
.navbtns { display: flex; gap: 21px; padding-left: 15px; width: 195px; }
.faded { opacity: .45; }
.urlbar { width: 900px; height: 41px; margin-right: 10px; border-radius: 21px; background: #38444b; display: flex; align-items: center; font-size: 17.500px; }
.tune { width: 36px; height: 36px; margin-left: 3px; border-radius: 50%; background: #45575f; display: flex; align-items: center; justify-content: center; }
.url { margin-left: 7px; white-space: nowrap; width: 800px; }
.url i { color: #acb4b9; }
.star { width: 24px; height: 24px; margin-left: 12px; color: #c3cacd; }
.exts { display: flex; }
.exts span { width: 45px; display: flex; justify-content: center; align-items: center; position: relative; }
.exts svg { width: 20px; height: 20px; }
.exts svg.i24 { width: 24px; height: 24px; }
.badge { position: absolute; left: 22px; top: 13px; width: 18px; height: 18px; border-radius: 4px; background: #55585a; font: bold 12px/18px Roboto, sans-serif; text-align: center; }
.badge.blue { background: #8ab4f8; color: #123; }
.tiny { font: bold 5.800px Roboto, sans-serif; fill: #fff; }
.pt { font: bold 13px Roboto, sans-serif; fill: #c43e1c; }
.mf { font: bold 14px "Liberation Sans", sans-serif; fill: #333; }
.vsep { width: 3px; height: 20px; border-radius: 2px; background: #2f3c42; }
.toolbar > .vsep { margin-left: 10px; }
.cast { margin-left: 20px; }
.toolbar > .cast + .vsep { margin-left: 21px; }
.dots { margin-left: 20px; }

.bookmarks { height: 42px; padding-bottom: 6px; display: flex; align-items: center; padding-left: 17px; background: #45575f; }
.bm { display: flex; align-items: center; gap: 7px; margin-right: 21px; white-space: nowrap; }
.cut { width: 144px; }
.fold { width: 24px; height: 20px; color: #c6c6c6; }
.apps { width: 20px; height: 20px; margin: 0 18px 0 -1px; color: #eee; }
.bmsep { margin-right: 18px; }
.more { margin-left: auto; margin-right: 17px; }
.bookmarks .all { margin: 0 18px 0 18px; }

/* application */
.app { height: 869px; flex: none; display: flex; }
.sidebar { width: 320px; flex: none; background: #17223b; border-right: 1px solid #343c48; }
.brand { height: 161px; border-bottom: 1px solid #343c48; display: flex; padding: 32px 0 0 41px; }
.clip { width: 65px; height: 76px; }
.wordmark { width: 120px; margin-left: 10px; display: flex; flex-direction: column; color: #f8f5f0; }
.wordmark b { font-size: 35px; line-height: 30px; font-weight: 600; letter-spacing: -.5px; }
.wordmark b:first-child { margin-top: 3px; }
.wordmark .lesson { letter-spacing: -1.400px; line-height: 29px; }
.wordmark small { font-size: 15px; line-height: 18px; margin: 3px 0 0 1px; font-weight: 600; letter-spacing: 3.100px; }
.collapse { margin: 38px 0 0 23px; }
nav { padding: 15px 20px; }
nav a { display: flex; align-items: center; gap: 15px; padding: 15px; font-size: 20px; line-height: 30px; color: #94a3b8; }
nav svg { width: 25px; height: 25px; fill: none; stroke: currentColor; stroke-width: 2; stroke-linecap: round; stroke-linejoin: round; }
nav span { white-space: nowrap; }

main { flex: 1; min-width: 0; position: relative; }
main .ln { stroke-linecap: round; stroke-linejoin: round; }
.pagehead { height: 128px; background: #17223b; border-bottom: 1px solid #343c48; display: flex; align-items: center; padding: 0 30px 0 45px; font-size: 17.500px; }
.back { display: flex; align-items: center; gap: 20px; font-weight: 500; width: 306px; }
.back span, .savebtn span { padding-bottom: 2px; }
.divider { width: 1px; height: 30px; background: #343c48; }
.headbook { width: 30px; height: 30px; margin: 0 10px 0 20px; fill: none; stroke: #60a5fa; stroke-width: 2; stroke-linecap: round; stroke-linejoin: round; }
h1 { margin: 0; font-size: 30px; line-height: 38px; font-weight: 600; }
.headtext { padding-bottom: 1px; }
.meta { display: flex; align-items: center; gap: 15px; margin-top: 7px; }
.pill { width: 72px; height: 42px; text-align: center; border-radius: 21px; background: #2563eb; font-size: 20px; line-height: 42px; font-weight: 600; }
.pupils { display: flex; align-items: center; gap: 5px; color: #94a3b8; }
.savebtn { margin-left: auto; width: 165px; height: 50px; border-radius: 7px; background: #1e429a; color: #8f9fbd; display: flex; align-items: center; gap: 20px; padding-left: 20px; font-weight: 500; }
.content { padding: 29px 30px 0; }
.viewrow { display: flex; align-items: center; height: 46px; font-size: 17.500px; font-weight: 500; }
.viewrow span { padding-bottom: 1px; }
.btn { height: 45px; border: 1px solid #343c48; border-radius: 7.500px; padding: 0 15px 1px; margin-left: 10px; font-weight: 500; }
.btn.on { background: #2563eb; border-color: #2563eb; margin-left: 15px; padding: 0 14px 1px; }
.cards { display: grid; grid-template-columns: 1fr 1fr; gap: 30px; margin-top: 30px; }
.card { height: 130px; background: #17223b; border: 1px solid #343c48; border-radius: 10px; padding: 30px; }
h3 { margin: 2px 0 0; font-size: 22.500px; line-height: 30px; font-weight: 600; letter-spacing: -.56px; }
.card p { margin: 10px 0 0; font-size: 17.500px; line-height: 25px; color: #94a3b8; }
h2 { margin: 29px 0 20px; font-size: 22.500px; line-height: 36px; font-weight: 600; }
.table { height: 234px; display: flex; border: 1px solid #343c48; border-bottom-width: 2px; border-radius: 10px; overflow: hidden; }
.th { height: 61px; border-bottom: 1px solid #343c48; display: flex; align-items: center; justify-content: center; font-size: 17.500px; font-weight: 500; padding-bottom: 4px; }
.td { height: 170px; }
.stickycol { width: 107px; flex: none; }
.stickycol .th { background: #334155; font-size: 20px; padding-bottom: 0; }
.stickycol .td { background: #1f2937; font-size: 22.500px; font-weight: 600; padding: 70px 0 0 20px; line-height: 28px; }
.scroller { flex: 1; min-width: 0; overflow: hidden; display: flex; }
.col { width: 225px; flex: none; border-right: 1px solid #343c48; }
.col:first-child { margin-left: -53px; }
.green .th { background: #0a3131; }
.green .td { background: #0c272d; }
.blue .th { background: #17275d; }
.blue .td { background: #142147; }
.col .td { padding: 15px 10px 0; display: flex; flex-direction: column; }
.col label { text-align: center; font-size: 15px; line-height: 20px; height: 30px; color: #94a3b8; }
.pair { display: flex; gap: 5px; height: 35px; margin-bottom: 10px; }
.sel { width: 100px; height: 35px; border: 1px solid #343c48; border-radius: 7.500px; background: #101629; padding: 0 15px 1px; display: flex; align-items: center; justify-content: space-between; font-size: 15px; white-space: nowrap; }
.sel svg { width: 20px; height: 20px; fill: none; stroke: #8a8f9a; stroke-width: 2; stroke-linecap: round; stroke-linejoin: round; }
.set em { flex: 1; text-align: right; }
.set svg { width: 12px; }
.slim svg { width: 14px; }
.hrs { width: 70px; }
.off { opacity: .5; }
.focus { box-shadow: 0 0 0 2.500px #101629, 0 0 0 5px #2563eb; }
.chatbtn { position: absolute; right: 20px; bottom: 20px; width: 70px; height: 70px; border-radius: 50%; background: #2563eb; display: flex; align-items: center; justify-content: center; box-shadow: 0 8px 12px rgba(0, 0, 0, .15); }

/* shelf */
.shelf { flex: 1; padding-bottom: 1px; background: #000; border-top: 1px solid #0b0c10; display: flex; align-items: center; color: #e4e2dd; font: 500 18px Roboto, sans-serif; }
.launcher { width: 44px; height: 44px; border-radius: 50%; background: #2f302f; display: flex; align-items: center; justify-content: center; margin-left: 8px; }
.launcher svg { width: 20px; height: 20px; }
.dock { margin-left: 454px; width: 842px; display: flex; gap: 28px; }
.dock span { width: 42px; height: 42px; position: relative; margin-top: -2px; }
.dock svg { width: 42px; height: 42px; }
.run::after { content: ""; position: absolute; left: 17px; bottom: -8px; width: 9px; height: 3px; border-radius: 1px; background: #c9c9c4; }
.run.wide::after { left: 14px; width: 17px; }
.docksep { width: 1px; height: 26px; margin: 7px -15px 0 -14px; background: #2f302f; }
.cal { font: bold 11px Roboto, sans-serif; fill: #1967d2; }
.tote { width: 85px; height: 45px; margin-right: 10px; }
.round { width: 45px; height: 45px; border-radius: 50%; background: #2f302f; display: flex; align-items: center; justify-content: center; margin-right: 10px; }
.plus { width: 53px; height: 45px; border-radius: 23px 5px 5px 23px; background: #2f302f; display: flex; align-items: center; justify-content: center; }
.date { width: 82px; height: 45px; margin-left: 5px; border-radius: 5px; background: #2f302f; line-height: 45px; text-align: center; padding-left: 2px; }
.status { width: 160px; height: 45px; margin-left: 5px; border-radius: 5px 23px 23px 5px; background: #2f302f; display: flex; align-items: center; gap: 10px; padding-left: 16px; }
.wifi { width: 20px; height: 16px; }
.bat { width: 11px; height: 18px; }
```
